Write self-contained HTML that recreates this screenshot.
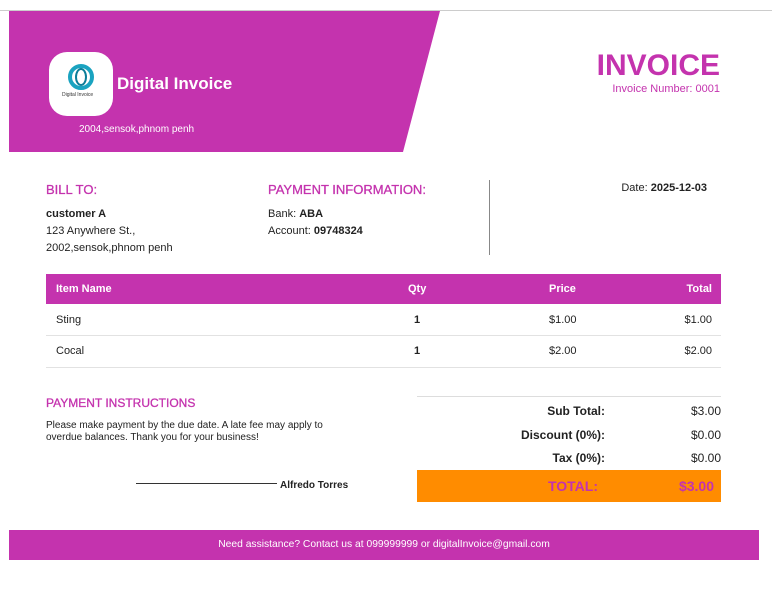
<!DOCTYPE html>
<html><head><style>
*{margin:0;padding:0;box-sizing:border-box}
body{width:772px;height:598px;background:#fff;font-family:"Liberation Sans",Arial,sans-serif;color:#222;position:relative;overflow:hidden}
.a{position:absolute;white-space:nowrap}
.p{color:#c433ae}
.b{font-weight:bold}
</style></head><body>
<div class="a" style="left:0;top:10px;width:772px;height:1px;background:#ccc"></div>
<svg class="a" style="left:0;top:0" width="772" height="160"><polygon points="9,11 440,11 403,152 9,152" fill="#c433ae"/></svg>
<div class="a" style="left:49px;top:52px;width:64px;height:64px;background:#fff;border-radius:18px"></div>
<svg class="a" style="left:66px;top:64px" width="30" height="26"><ellipse cx="15" cy="13" rx="11" ry="11" fill="none" stroke="#1aa3c0" stroke-width="4"/><ellipse cx="15" cy="13" rx="5" ry="8" fill="none" stroke="#0c7d99" stroke-width="2"/></svg>
<div class="a" style="left:62px;top:92px;font-size:5px;color:#333">Digital Invoice</div>
<div class="a b" style="left:117px;top:74px;font-size:17px;color:#fff">Digital Invoice</div>
<div class="a" style="left:79px;top:124px;font-size:10px;color:#fff">2004,sensok,phnom penh</div>
<div class="a b p" style="right:52px;top:49px;font-size:30px">INVOICE</div>
<div class="a p" style="right:52px;top:83px;font-size:11px">Invoice Number: 0001</div>

<div class="a p" style="left:46px;top:182px;font-size:13px;-webkit-text-stroke:.3px #c433ae">BILL TO:</div>
<div class="a" style="left:46px;top:206px;font-size:11px;line-height:17px"><b>customer A</b><br>123 Anywhere St.,<br>2002,sensok,phnom penh</div>
<div class="a p" style="left:268px;top:182px;font-size:13px;-webkit-text-stroke:.3px #c433ae">PAYMENT INFORMATION:</div>
<div class="a" style="left:268px;top:206px;font-size:11px;line-height:17px">Bank: <b>ABA</b><br>Account: <b>09748324</b></div>
<div class="a" style="left:489px;top:180px;width:1px;height:75px;background:#888"></div>
<div class="a" style="right:65px;top:182px;font-size:11px">Date: <b>2025-12-03</b></div>

<div class="a" style="left:46px;top:274px;width:675px;height:30px;background:#c433ae"></div>
<div class="a b" style="left:56px;top:283px;font-size:11px;color:#fff">Item Name</div>
<div class="a b" style="left:408px;top:283px;font-size:11px;color:#fff">Qty</div>
<div class="a b" style="left:549px;top:283px;font-size:11px;color:#fff">Price</div>
<div class="a b" style="right:60px;top:283px;font-size:11px;color:#fff">Total</div>
<div class="a" style="left:56px;top:314px;font-size:11px">Sting</div>
<div class="a b" style="left:414px;top:314px;font-size:11px">1</div>
<div class="a" style="left:549px;top:314px;font-size:11px">$1.00</div>
<div class="a" style="right:60px;top:314px;font-size:11px">$1.00</div>
<div class="a" style="left:46px;top:335px;width:675px;height:1px;background:#e2e2e2"></div>
<div class="a" style="left:56px;top:345px;font-size:11px">Cocal</div>
<div class="a b" style="left:414px;top:345px;font-size:11px">1</div>
<div class="a" style="left:549px;top:345px;font-size:11px">$2.00</div>
<div class="a" style="right:60px;top:345px;font-size:11px">$2.00</div>
<div class="a" style="left:46px;top:367px;width:675px;height:1px;background:#e2e2e2"></div>

<div class="a p" style="left:46px;top:396px;font-size:12px;-webkit-text-stroke:.3px #c433ae">PAYMENT INSTRUCTIONS</div>
<div class="a" style="left:46px;top:420px;font-size:10px;line-height:12px">Please make payment by the due date. A late fee may apply to<br>overdue balances. Thank you for your business!</div>
<div class="a" style="left:136px;top:483px;width:141px;height:1px;background:#333"></div>
<div class="a b" style="left:280px;top:480px;font-size:10px">Alfredo Torres</div>

<div class="a" style="left:417px;top:396px;width:304px;height:1px;background:#ddd"></div>
<div class="a b" style="right:167px;top:404px;font-size:12px">Sub Total:</div>
<div class="a" style="right:51px;top:404px;font-size:12px">$3.00</div>
<div class="a b" style="right:167px;top:428px;font-size:12px">Discount (0%):</div>
<div class="a" style="right:51px;top:428px;font-size:12px">$0.00</div>
<div class="a b" style="right:167px;top:451px;font-size:12px">Tax (0%):</div>
<div class="a" style="right:51px;top:451px;font-size:12px">$0.00</div>
<div class="a" style="left:417px;top:470px;width:304px;height:32px;background:#ff8c00"></div>
<div class="a b p" style="right:174px;top:478px;font-size:14px">TOTAL:</div>
<div class="a b p" style="right:58px;top:478px;font-size:14px">$3.00</div>

<div class="a" style="left:9px;top:530px;width:750px;height:30px;background:#c433ae"></div>
<div class="a" style="left:9px;top:539px;width:750px;text-align:center;font-size:10.3px;color:#fff">Need assistance? Contact us at 099999999 or digitalInvoice@gmail.com</div>
</body></html>
